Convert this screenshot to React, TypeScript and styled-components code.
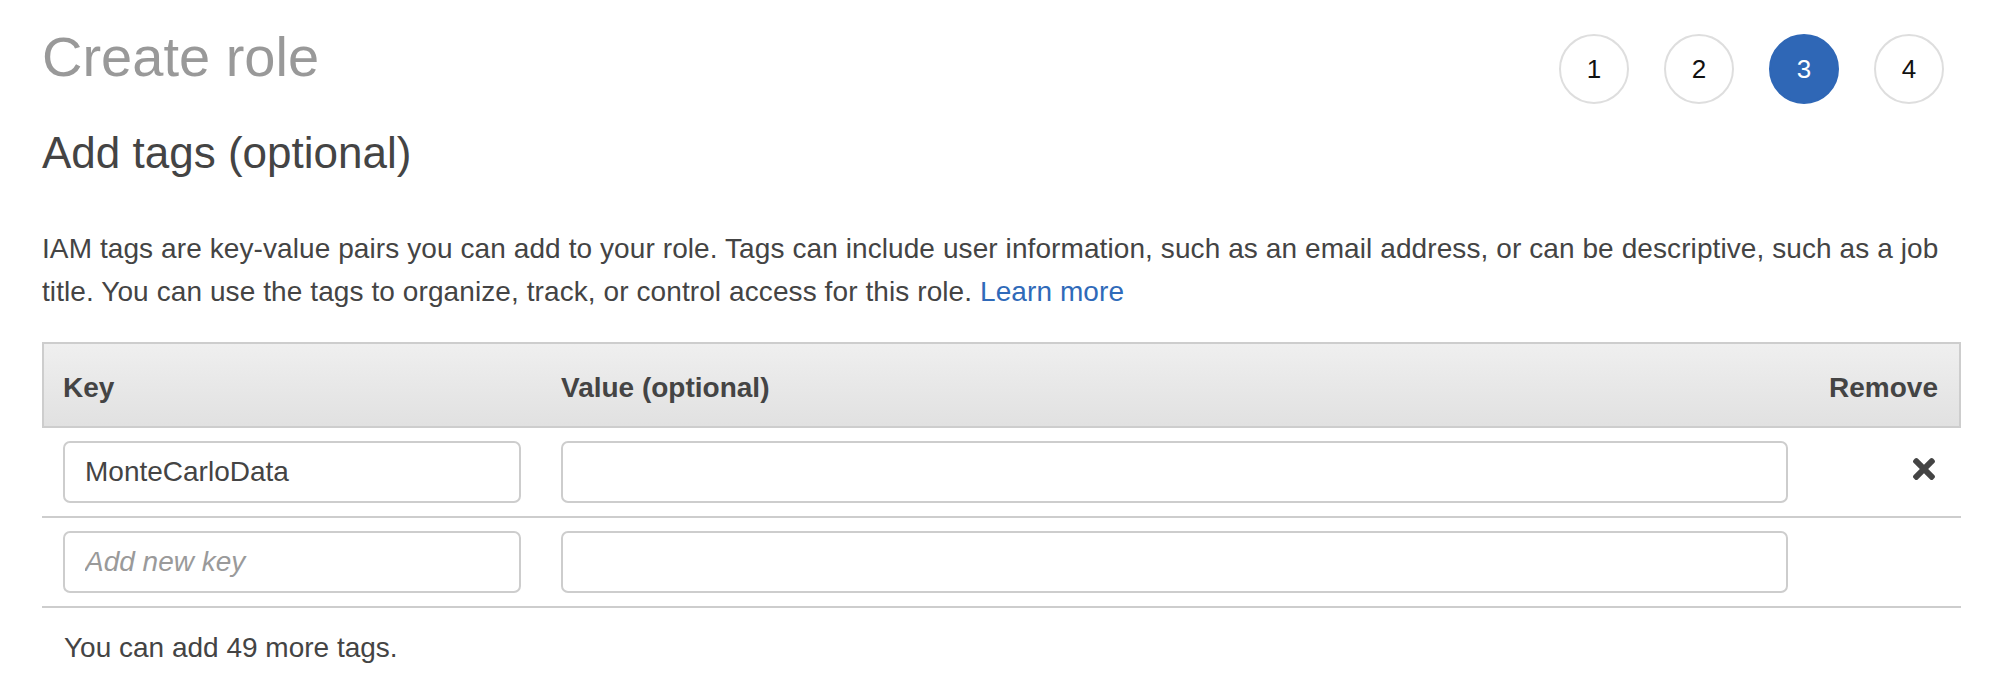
import React, { FC } from 'react';
import styled, { createGlobalStyle } from 'styled-components';
import { FaTimes } from 'react-icons/fa';

const GlobalStyle = createGlobalStyle`
  html, body {
    margin: 0;
    padding: 0;
    background: #fff;
  }

  body {
    font-family: "Liberation Sans", Arial, Helvetica, sans-serif;
    color: #444;
  }

  * {
    box-sizing: border-box;
  }
`;

const SPage = styled.div`
  padding: 25px 45px 0 42px;
`;

const STopBar = styled.div`
  display: flex;
  justify-content: space-between;
  align-items: flex-start;
`;

const STitle = styled.h1`
  margin: 0;
  font-size: 56px;
  line-height: 64px;
  font-weight: normal;
  color: #999;
`;

const SSteps = styled.ol`
  display: flex;
  gap: 35px;
  margin: 9px 17px 0 0;
  padding: 0;
  list-style: none;
`;

const SStep = styled.li<{ active: boolean }>`
  display: flex;
  align-items: center;
  justify-content: center;
  width: 70px;
  height: 70px;

  font-size: 26px;
  color: ${({ active }) => active ? '#fff' : '#111'};
  background: ${({ active }) => active ? '#2f67b6' : '#fff'};
  border: 2px solid ${({ active }) => active ? '#2f67b6' : '#dedede'};
  border-radius: 50%;
`;

const SSubtitle = styled.h2`
  margin: 23px 0 0;
  font-size: 44px;
  line-height: 52px;
  font-weight: normal;
  color: #444;
`;

const SDescription = styled.div`
  margin: 48px 0 0;
  font-size: 28px;
  line-height: 43px;
  letter-spacing: 0.09px;
  color: #444;

  a {
    color: #2f6ab9;
    text-decoration: none;
  }
`;

const STable = styled.div`
  margin-top: 29px;
`;

const SHeader = styled.div`
  display: grid;
  grid-template-columns: 498px 1fr 150px;
  height: 86px;
  padding-top: 28px;

  background: linear-gradient(#efefef, #e1e1e1);
  border: 2px solid #cdcdcd;

  font-size: 28px;
  line-height: 32px;
  font-weight: bold;
  color: #444;
`;

const SHeaderCell = styled.div<{ alignRight?: boolean }>`
  padding: 0 21px 0 19px;
  text-align: ${({ alignRight }) => alignRight ? 'right' : 'left'};
`;

const SRow = styled.div`
  display: grid;
  grid-template-columns: 498px 1fr 150px;
  align-items: center;
  height: 90px;
  padding: 13px 2px 15px;
  border-bottom: 2px solid #cdcdcd;
`;

const SCell = styled.div`
  padding: 0 21px 0 19px;
`;

const SRemoveCell = styled.div`
  display: flex;
  justify-content: flex-end;
  padding-right: 19px;

  svg {
    margin-top: -6px;
    color: #444;
  }
`;

const SInput = styled.input`
  display: block;
  width: 100%;
  height: 62px;
  padding: 0 20px;

  font-family: "Liberation Sans", Arial, Helvetica, sans-serif;
  font-size: 28px;
  color: #444;

  background: #fff;
  border: 2px solid #cdcdcd;
  border-radius: 7px;
  outline: none;

  &::placeholder {
    color: #9a9a9a;
    font-style: italic;
  }
`;

const SFooter = styled.p`
  margin: 18px 0 0;
  padding-left: 22px;
  font-size: 28px;
  line-height: 43px;
  color: #444;
`;

type Tag = { key: string, value: string };

const tags: Tag[] = [
  { key: 'MonteCarloData', value: '' }
];

const App: FC = () => (
  <>
    <GlobalStyle />
    <SPage>
      <STopBar>
        <STitle>Create role</STitle>
        <SSteps>
          {[1, 2, 3, 4].map(step => (
            <SStep key={step} active={step === 3}>{step}</SStep>
          ))}
        </SSteps>
      </STopBar>

      <SSubtitle>Add tags (optional)</SSubtitle>
      <SDescription>
        IAM tags are key-value pairs you can add to your role. Tags can include user information, such as an email
        address, or can be descriptive, such as a job title. You can use the tags to organize, track, or control
        access for this role. <a href='#'>Learn more</a>
      </SDescription>

      <STable>
        <SHeader>
          <SHeaderCell>Key</SHeaderCell>
          <SHeaderCell>Value (optional)</SHeaderCell>
          <SHeaderCell alignRight>Remove</SHeaderCell>
        </SHeader>
        {tags.map(tag => (
          <SRow key={tag.key}>
            <SCell><SInput defaultValue={tag.key} /></SCell>
            <SCell><SInput defaultValue={tag.value} /></SCell>
            <SRemoveCell><FaTimes size={32} /></SRemoveCell>
          </SRow>
        ))}
        <SRow>
          <SCell><SInput placeholder='Add new key' /></SCell>
          <SCell><SInput /></SCell>
          <SRemoveCell />
        </SRow>
      </STable>

      <SFooter>You can add 49 more tags.</SFooter>
    </SPage>
  </>
);

export default App;
